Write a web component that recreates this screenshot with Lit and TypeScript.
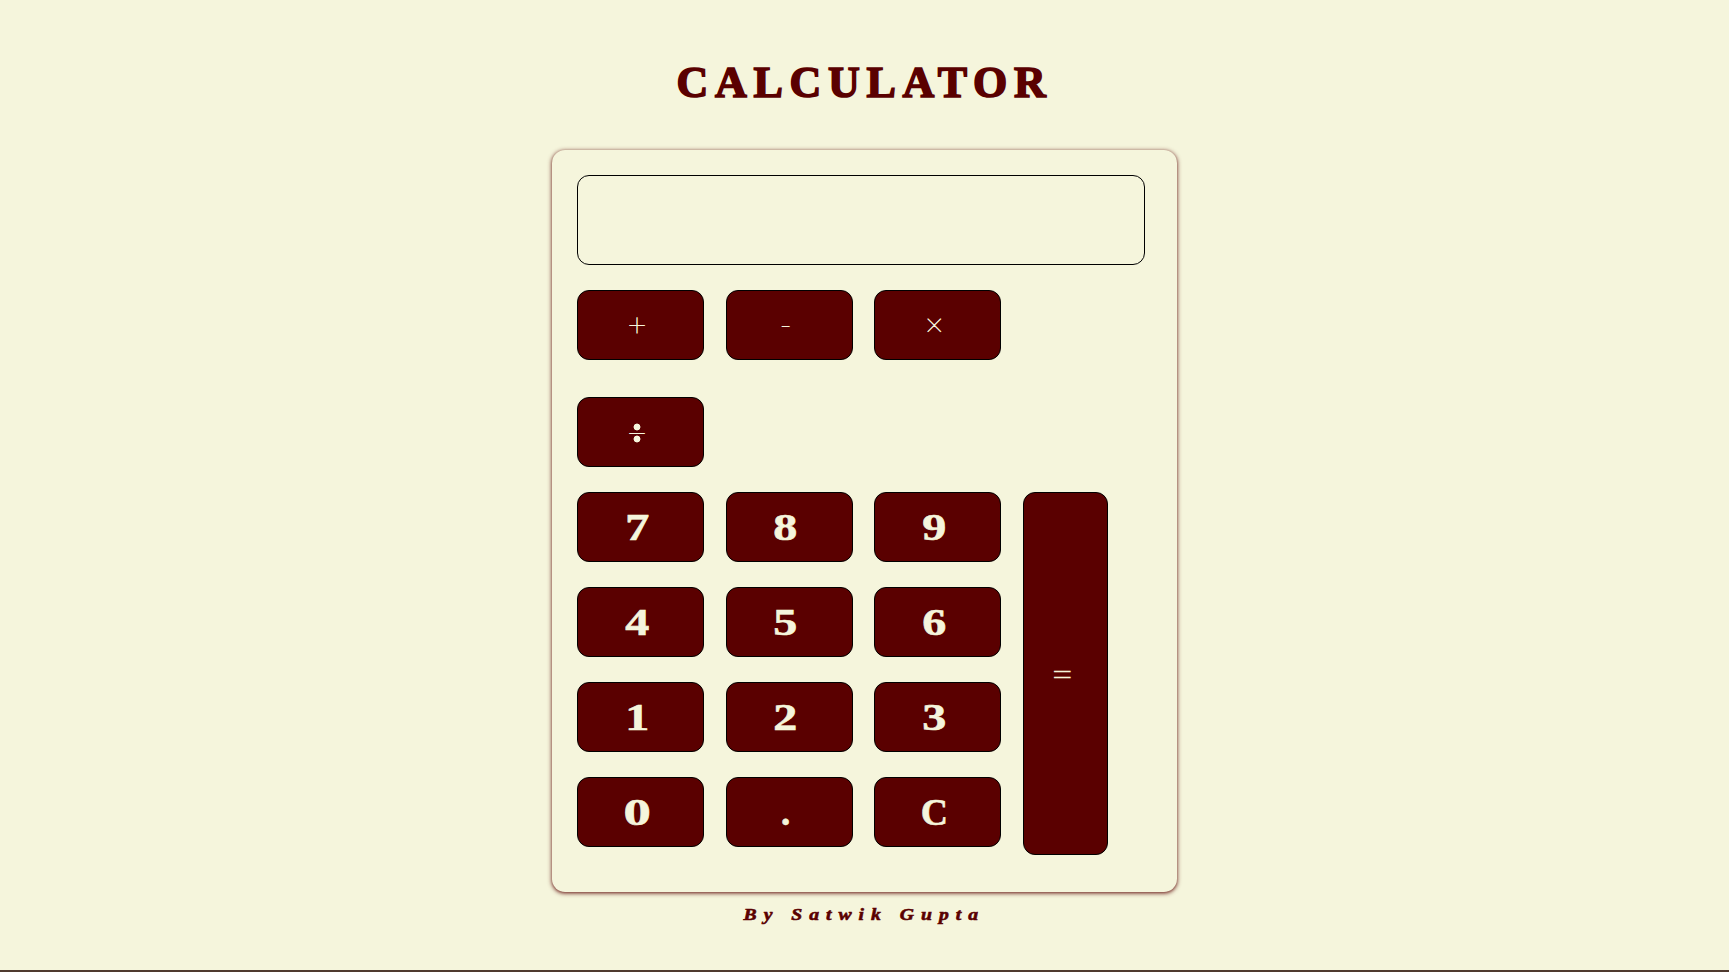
import { LitElement, html, css } from "lit";
import { customElement, state } from "lit/decorators.js";

@customElement("app-root")
export class AppRoot extends LitElement {
  static styles = css`
    :host {
      display: flex;
      flex-direction: column;
      align-items: center;
      box-sizing: border-box;
      height: 972px;
      padding-top: 50px;
      background: #f5f5dc;
      color: #5a0000;
      border-bottom: 2px solid #4f3a2f;
      font-family: "Liberation Serif", serif;
      font-weight: 700;
      overflow: hidden;
    }
    h1 {
      margin: 0;
      height: 100px;
      line-height: 66px;
      font-size: 44px;
      letter-spacing: 6.7px;
      -webkit-text-stroke: 1.6px #5a0000;
      white-space: nowrap;
    }
    .card {
      box-sizing: border-box;
      width: 625px;
      height: 742px;
      flex: none;
      padding: 25px;
      border-radius: 13px;
      box-shadow: rgba(90, 0, 0, 0.55) 0 1px 3px 0, rgba(90, 0, 0, 0.45) 0 1px 4px 1px;
    }
    .display {
      box-sizing: border-box;
      width: 568px;
      height: 90px;
      border: 1px solid #000;
      border-radius: 12px;
      margin-bottom: 25px;
      padding: 0 20px;
      line-height: 88px;
      font-size: 37px;
      text-align: right;
      overflow: hidden;
    }
    .ops {
      display: grid;
      grid-template-columns: repeat(3, 127px);
      column-gap: 21.6px;
      row-gap: 37px;
      margin-bottom: 25px;
    }
    .pad {
      display: grid;
      grid-template-columns: repeat(3, 127px) 85px;
      grid-template-rows: repeat(3, 70px) 78px;
      column-gap: 21.6px;
      row-gap: 25px;
    }
    button {
      box-sizing: border-box;
      height: 70px;
      padding: 2px 7px 0 0;
      border: 1px solid #000;
      border-radius: 12px;
      background: #5a0000;
      color: #f5f5dc;
      font: 700 37px/66px "Liberation Serif", serif;
    }
    .glyph {
      display: inline-block;
      transform: scaleX(1.3);
      -webkit-text-stroke: 0.6px #f5f5dc;
    }
    .zero .glyph {
      transform: scaleX(1.48);
    }
    .dot .glyph {
      transform: none;
    }
    .letter .glyph {
      transform: scaleX(1.02);
    }
    .thin {
      padding: 0 7px 2px 0;
    }
    .thin .glyph {
      font-family: Lato, sans-serif;
      font-weight: 100;
      font-size: 32px;
      transform: none;
      -webkit-text-stroke: 0.8px #f5f5dc;
    }
    .divide .glyph {
      background:
        radial-gradient(circle at 50% calc(50% - 5px), #f5f5dc 3px, transparent 3.8px),
        radial-gradient(circle at 50% calc(50% + 7px), #f5f5dc 3px, transparent 3.8px);
    }
    .divide {
      padding: 0 7px 0 0;
    }
    .equals {
      grid-column: 4;
      grid-row: 1 / 5;
      height: 363px;
    }
    .equals .glyph {
      transform: scale(1.22);
    }
    .credit {
      height: 40px;
      line-height: 45px;
      font-size: 17.5px;
      font-style: italic;
      letter-spacing: 6.2px;
      -webkit-text-stroke: 0.6px #5a0000;
      transform: scaleX(1.125);
      white-space: nowrap;
    }
  `;

  @state() private value = "";

  private press(k: string) {
    if (k === "C") this.value = "";
    else if (k === "=") this.value = this.compute();
    else this.value += k;
  }

  private compute(): string {
    const tokens = this.value.match(/[\d.]+|[+\-×÷]/g) ?? [];
    const nums: number[] = [parseFloat(tokens[0] ?? "0")];
    for (let i = 1; i < tokens.length - 1; i += 2) {
      const n = parseFloat(tokens[i + 1]);
      if (tokens[i] === "+") nums.push(n);
      else if (tokens[i] === "-") nums.push(-n);
      else if (tokens[i] === "×") nums.push((nums.pop() ?? 0) * n);
      else nums.push((nums.pop() ?? 0) / n);
    }
    return String(nums.reduce((a, b) => a + b, 0));
  }

  private key(k: string, cls = "") {
    return html`<button class=${cls} @click=${() => this.press(k)}><span class="glyph">${k}</span></button>`;
  }

  render() {
    return html`
      <h1>CALCULATOR</h1>
      <div class="card">
        <div class="display">${this.value}</div>
        <div class="ops">
          ${["+", "-", "×"].map((k) => this.key(k, "thin"))}
          ${this.key("÷", "thin divide")}
        </div>
        <div class="pad">
          ${["7", "8", "9"].map((k) => this.key(k))}
          ${this.key("=", "thin equals")}
          ${["4", "5", "6", "1", "2", "3"].map((k) => this.key(k))}
          ${this.key("0", "zero")}
          ${this.key(".", "dot")}
          ${this.key("C", "letter")}
        </div>
      </div>
      <div class="credit">By Satwik Gupta</div>
    `;
  }
}
